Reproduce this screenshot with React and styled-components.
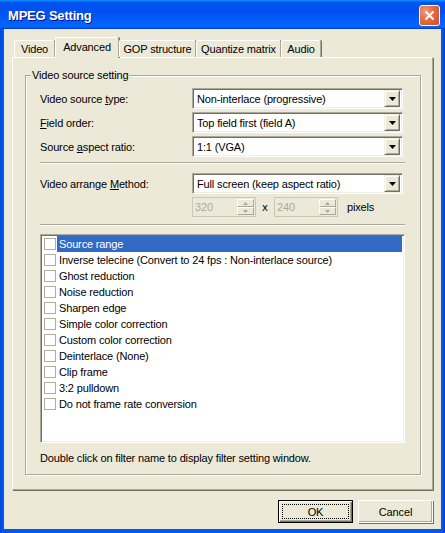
import styled, { createGlobalStyle } from "styled-components";

const GlobalStyle = createGlobalStyle`
  html, body {
    margin: 0;
    padding: 0;
    background: #fff;
  }
  body {
    font-family: "Liberation Sans", Arial, sans-serif;
    font-size: 11px;
    letter-spacing: -0.15px;
    color: #000;
  }
`;

const tabs = ["Video", "Advanced", "GOP structure", "Quantize matrix", "Audio"];
const tabWidths = [41, 64, 77, 85, 40];

const filters = [
  "Source range",
  "Inverse telecine (Convert to 24 fps : Non-interlace source)",
  "Ghost reduction",
  "Noise reduction",
  "Sharpen edge",
  "Simple color correction",
  "Custom color correction",
  "Deinterlace (None)",
  "Clip frame",
  "3:2 pulldown",
  "Do not frame rate conversion",
];

const DownArrow = () => (
  <svg width="7" height="4" viewBox="0 0 7 4">
    <path d="M0 0h7L3.5 4z" fill="#000" />
  </svg>
);

const Combo = ({ value }) => (
  <ComboBox>
    <ComboText>{value}</ComboText>
    <ComboButton>
      <DownArrow />
    </ComboButton>
  </ComboBox>
);

const Spin = ({ value }) => (
  <SpinBox>
    <SpinText>{value}</SpinText>
    <SpinButtons>
      <SpinHalf>
        <svg width="5" height="3" viewBox="0 0 5 3">
          <path d="M0 3h5L2.5 0z" fill="#ACA899" />
        </svg>
      </SpinHalf>
      <SpinHalf>
        <svg width="5" height="3" viewBox="0 0 5 3">
          <path d="M0 0h5L2.5 3z" fill="#ACA899" />
        </svg>
      </SpinHalf>
    </SpinButtons>
  </SpinBox>
);

const App = () => {
  return (
    <>
      <GlobalStyle />
      <Window>
        <TitleBar>
          <Title>MPEG Setting</Title>
          <CloseButton>
            <svg width="11" height="11" viewBox="0 0 11 11">
              <path d="M1.5 1.5l8 8M9.5 1.5l-8 8" stroke="#fff" strokeWidth="2" />
            </svg>
          </CloseButton>
        </TitleBar>
        <Body>
          <TabRow>
            {tabs.map((t, i) => (
              <Tab key={t} $active={i === 1} style={{ width: tabWidths[i] }}>
                {t}
              </Tab>
            ))}
          </TabRow>
          <Panel>
            <Group>
              <GroupLabel>Video source setting</GroupLabel>
              <FieldRow>
                <FieldLabel>
                  Video source <u>t</u>ype:
                </FieldLabel>
                <Combo value="Non-interlace (progressive)" />
              </FieldRow>
              <FieldRow>
                <FieldLabel>
                  <u>F</u>ield order:
                </FieldLabel>
                <Combo value="Top field first (field A)" />
              </FieldRow>
              <FieldRow>
                <FieldLabel>
                  Source <u>a</u>spect ratio:
                </FieldLabel>
                <Combo value="1:1 (VGA)" />
              </FieldRow>
              <Separator $top={2} $bottom={9} />
              <FieldRow>
                <FieldLabel>
                  Video arrange <u>M</u>ethod:
                </FieldLabel>
                <Combo value="Full screen (keep aspect ratio)" />
              </FieldRow>
              <SizeRow>
                <Spin value="320" />
                <Times>x</Times>
                <Spin value="240" />
                <Unit>pixels</Unit>
              </SizeRow>
              <Separator $top={7} $bottom={8} />
              <ListBox>
                {filters.map((f, i) => (
                  <ListItem key={f}>
                    <Check />
                    <ItemText $selected={i === 0}>{f}</ItemText>
                  </ListItem>
                ))}
              </ListBox>
              <Hint>Double click on filter name to display filter setting window.</Hint>
            </Group>
          </Panel>
          <ButtonRow>
            <Button $default>
              <Focus>OK</Focus>
            </Button>
            <Button>Cancel</Button>
          </ButtonRow>
        </Body>
      </Window>
    </>
  );
};

const Window = styled.div`
  width: 445px;
  height: 533px;
  display: flex;
  flex-direction: column;
  background: linear-gradient(to right, #0046d8 0, #0058ee 2px, #0058ee 443px, #0036c0 445px);
  box-sizing: border-box;
`;

const TitleBar = styled.div`
  height: 29px;
  flex-shrink: 0;
  display: flex;
  align-items: center;
  justify-content: space-between;
  padding: 0 5px 0 8px;
  background: linear-gradient(
    180deg,
    #0997ff,
    #0053ee 8%,
    #0050ee 40%,
    #0066ff 88%,
    #0066ff 93%,
    #005bff 95%,
    #003dd7 96%,
    #003dd7
  );
`;

const Title = styled.span`
  color: #fff;
  font-family: "Liberation Sans", Arial, sans-serif;
  font-weight: bold;
  font-size: 13px;
  letter-spacing: -0.2px;
  text-shadow: 1px 1px #0f1089;
  margin-top: 1px;
`;

const CloseButton = styled.div`
  width: 21px;
  height: 21px;
  box-sizing: border-box;
  border: 1px solid #fff;
  border-radius: 3px;
  display: flex;
  align-items: center;
  justify-content: center;
  background: radial-gradient(circle at 30% 30%, #f29a7a 0, #e46a43 45%, #d44a1c 100%);
  margin-top: 1px;
`;

const Body = styled.div`
  flex: 1;
  margin: 0 4px 4px;
  background: #ece9d8;
  padding: 8px 8px 6px 8px;
  display: flex;
  flex-direction: column;
`;

const TabRow = styled.div`
  display: flex;
  align-items: flex-end;
  height: 20px;
  padding-left: 2px;
  position: relative;
  z-index: 1;
`;

const Tab = styled.div`
  box-sizing: border-box;
  height: ${(p) => (p.$active ? "21px" : "17px")};
  margin-bottom: ${(p) => (p.$active ? "-1px" : "0")};
  background: #ece9d8;
  border-top: 1px solid #fff;
  border-left: 1px solid #fff;
  border-right: 1px solid #aca899;
  box-shadow: 1px 0 0 #716f64;
  border-radius: 2px 2px 0 0;
  display: flex;
  justify-content: center;
  padding-top: ${(p) => (p.$active ? "3px" : "2px")};
  white-space: nowrap;
`;

const Panel = styled.div`
  flex: 1;
  box-sizing: border-box;
  width: 421px;
  border-top: 1px solid #fff;
  border-left: 1px solid #fff;
  border-right: 1px solid #aca899;
  border-bottom: 1px solid #aca899;
  box-shadow: 1px 1px 0 #716f64;
  padding: 17px 11px 14px 12px;
  display: flex;
`;

const Group = styled.div`
  flex: 1;
  position: relative;
  border: 1px solid #aca899;
  box-shadow: inset 1px 1px 0 #fff, 1px 1px 0 #fff;
  padding: 12px 15px 0 14px;
  display: flex;
  flex-direction: column;
`;

const GroupLabel = styled.span`
  position: absolute;
  top: -7px;
  left: 5px;
  padding: 0 1px;
  background: #ece9d8;
  line-height: 13px;
`;

const FieldRow = styled.div`
  display: flex;
  align-items: center;
  height: 21px;
  margin-bottom: 3px;
`;

const FieldLabel = styled.span`
  width: 152px;
  flex-shrink: 0;
`;

const ComboBox = styled.div`
  box-sizing: border-box;
  width: 211px;
  height: 21px;
  background: #fff;
  border-top: 1px solid #aca899;
  border-left: 1px solid #aca899;
  border-right: 1px solid #fff;
  border-bottom: 1px solid #fff;
  box-shadow: inset 1px 1px 0 #716f64, inset -1px -1px 0 #f1efe2;
  display: flex;
  align-items: center;
  padding: 2px;
`;

const ComboText = styled.span`
  flex: 1;
  padding-left: 2px;
  white-space: nowrap;
`;

const ComboButton = styled.div`
  box-sizing: border-box;
  width: 16px;
  height: 17px;
  background: #ece9d8;
  border-top: 1px solid #f1efe2;
  border-left: 1px solid #f1efe2;
  border-right: 1px solid #716f64;
  border-bottom: 1px solid #716f64;
  box-shadow: inset 1px 1px 0 #fff, inset -1px -1px 0 #aca899;
  display: flex;
  align-items: center;
  justify-content: center;
`;

const SizeRow = styled.div`
  display: flex;
  align-items: center;
  padding-left: 152px;
  height: 20px;
`;

const SpinBox = styled.div`
  box-sizing: border-box;
  width: 64px;
  height: 20px;
  border: 1px solid #c9c7ba;
  display: flex;
  align-items: center;
  padding: 1px;
`;

const SpinText = styled.span`
  flex: 1;
  color: #aca899;
  padding-left: 1px;
`;

const SpinButtons = styled.div`
  display: flex;
  flex-direction: column;
  width: 17px;
  height: 16px;
`;

const SpinHalf = styled.div`
  flex: 1;
  box-sizing: border-box;
  background: #ece9d8;
  border-top: 1px solid #fff;
  border-left: 1px solid #fff;
  border-right: 1px solid #aca899;
  border-bottom: 1px solid #aca899;
  display: flex;
  align-items: center;
  justify-content: center;
`;

const Times = styled.span`
  width: 18px;
  text-align: center;
`;

const Unit = styled.span`
  margin-left: 9px;
`;

const Separator = styled.div`
  height: 1px;
  border-top: 1px solid #aca899;
  background: #fff;
  margin: ${(p) => `${p.$top}px 0 ${p.$bottom}px`};
`;

const ListBox = styled.div`
  box-sizing: border-box;
  height: 209px;
  width: 365px;
  background: #fff;
  border-top: 1px solid #aca899;
  border-left: 1px solid #aca899;
  border-right: 1px solid #fff;
  border-bottom: 1px solid #fff;
  box-shadow: inset 1px 1px 0 #716f64, inset -1px -1px 0 #f1efe2;
  padding: 1px 2px 2px 2px;
  display: flex;
  flex-direction: column;
`;

const ListItem = styled.div`
  display: flex;
  align-items: center;
  height: 16px;
`;

const Check = styled.span`
  box-sizing: border-box;
  width: 12px;
  height: 12px;
  margin: 0 1px 0 1px;
  border: 1px solid #b0ada0;
  background: #fff;
  flex-shrink: 0;
`;

const ItemText = styled.span`
  flex: 1;
  height: 16px;
  line-height: 16px;
  padding-left: 2px;
  white-space: nowrap;
  background: ${(p) => (p.$selected ? "#316ac5" : "transparent")};
  color: ${(p) => (p.$selected ? "#fff" : "#000")};
`;

const Hint = styled.div`
  margin-top: 9px;
  line-height: 13px;
`;

const ButtonRow = styled.div`
  display: flex;
  justify-content: flex-end;
  gap: 5px;
  margin-top: 10px;
`;

const Button = styled.div`
  box-sizing: border-box;
  width: 75px;
  height: 23px;
  background: #ece9d8;
  border: 1px solid ${(p) => (p.$default ? "#000" : "#fff")};
  box-shadow: ${(p) =>
    p.$default
      ? "inset 1px 1px 0 #fff, inset -1px -1px 0 #716f64, inset -2px -2px 0 #aca899"
      : "1px 1px 0 #716f64, inset -1px -1px 0 #aca899"};
  display: flex;
  align-items: center;
  justify-content: center;
  padding: 3px;
`;

const Focus = styled.span`
  flex: 1;
  align-self: stretch;
  display: flex;
  align-items: center;
  justify-content: center;
  border: 1px dotted #000;
`;

export default App;
